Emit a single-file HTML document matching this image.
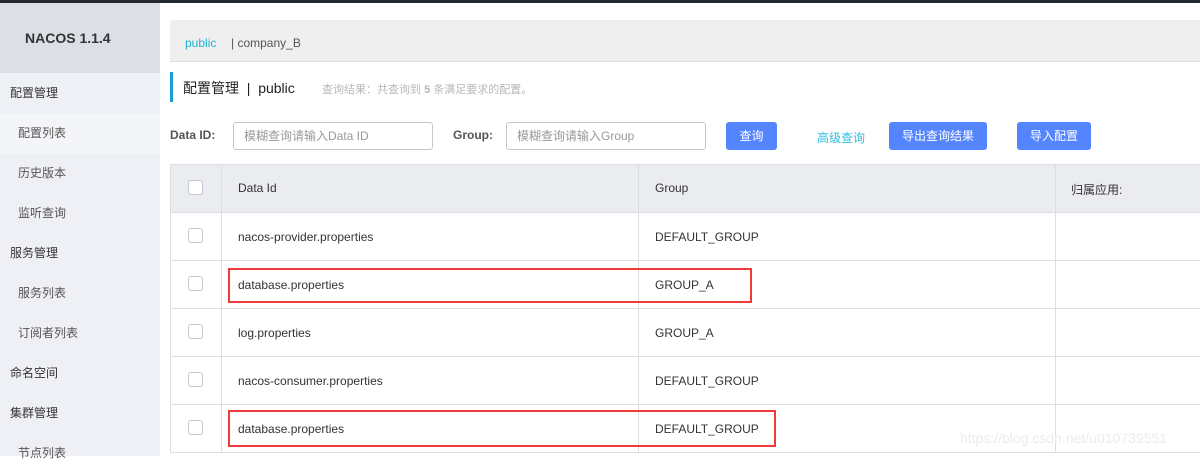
<!DOCTYPE html>
<html><head><meta charset="utf-8"><style>
*{margin:0;padding:0;box-sizing:border-box}
body{width:1200px;height:456px;overflow:hidden;background:#fff;font-family:"Liberation Sans","Noto Sans CJK SC",sans-serif;font-size:12px;color:#333;position:relative}
.a{position:absolute}
.side{left:0;top:0;width:160px;height:456px;background:#eef0f5}
.nav{left:0;width:160px;height:40px;line-height:40px;font-size:12px;color:#333}
.sub{padding-left:18px;color:#555}
.top{padding-left:10px}
.inp{height:28px;border:1px solid #c4c6cf;border-radius:3px;color:#999;padding-left:10px;line-height:26px}
.btn{height:28px;background:#5584ff;color:#fff;border-radius:3px;text-align:center;line-height:28px}
.hl{background:#dcdee3}
.vl{background:#dcdee3;width:1px}
.cb{width:15px;height:15px;border:1px solid #c4c6cf;border-radius:3px;background:#fff}
.t{font-size:12px;color:#333}
.red{border:2px solid #f03a3a}
</style></head><body>
<div class="a side"></div>
<div class="a" style="left:0;top:3px;width:160px;height:70px;background:#dcdfe6"></div>
<div class="a" style="left:0;top:0;width:1200px;height:3px;background:#23272e"></div>
<div class="a" style="left:25px;top:30px;font-weight:bold;font-size:14px;color:#333">NACOS 1.1.4</div>
<div class="a nav top" style="top:73px">配置管理</div>
<div class="a nav sub" style="top:113px;background:#f4f5f8">配置列表</div>
<div class="a nav sub" style="top:153px">历史版本</div>
<div class="a nav sub" style="top:193px">监听查询</div>
<div class="a nav top" style="top:233px">服务管理</div>
<div class="a nav sub" style="top:273px">服务列表</div>
<div class="a nav sub" style="top:313px">订阅者列表</div>
<div class="a nav top" style="top:353px">命名空间</div>
<div class="a nav top" style="top:393px">集群管理</div>
<div class="a nav sub" style="top:433px">节点列表</div>

<div class="a" style="left:170px;top:20px;width:1030px;height:42px;background:#efefef;border-bottom:1px solid #dcdee3"></div>
<div class="a" style="left:185px;top:36px;color:#1fb3d8">public</div>
<div class="a" style="left:231px;top:36px;color:#555">| company_B</div>

<div class="a" style="left:170px;top:72px;width:3px;height:30px;background:#1a9fd6"></div>
<div class="a" style="left:183px;top:78px;font-size:14px;color:#222">配置管理 &nbsp;|&nbsp; public</div>
<div class="a" style="left:322px;top:81px;font-size:11px;color:#b8b8b8">查询结果：共查询到 <b>5</b> 条满足要求的配置。</div>

<div class="a" style="left:170px;top:128px;font-weight:bold;color:#555">Data ID:</div>
<div class="a inp" style="left:233px;top:122px;width:200px">模糊查询请输入Data ID</div>
<div class="a" style="left:453px;top:128px;font-weight:bold;color:#555">Group:</div>
<div class="a inp" style="left:506px;top:122px;width:200px">模糊查询请输入Group</div>
<div class="a btn" style="left:726px;top:122px;width:51px">查询</div>
<div class="a" style="left:817px;top:129px;color:#33bde0">高级查询</div>
<div class="a btn" style="left:889px;top:122px;width:98px">导出查询结果</div>
<div class="a btn" style="left:1017px;top:122px;width:74px">导入配置</div>

<div class="a" style="left:170px;top:164px;width:1030px;height:48px;background:#ebecf0"></div>
<div class="a hl" style="left:170px;top:164px;width:1030px;height:1px"></div>
<div class="a hl" style="left:170px;top:212px;width:1030px;height:1px"></div>
<div class="a hl" style="left:170px;top:260px;width:1030px;height:1px"></div>
<div class="a hl" style="left:170px;top:308px;width:1030px;height:1px"></div>
<div class="a hl" style="left:170px;top:356px;width:1030px;height:1px"></div>
<div class="a hl" style="left:170px;top:404px;width:1030px;height:1px"></div>
<div class="a hl" style="left:170px;top:452px;width:1030px;height:1px"></div>
<div class="a vl" style="left:170px;top:164px;height:289px"></div>
<div class="a vl" style="left:221px;top:164px;height:289px"></div>
<div class="a vl" style="left:638px;top:164px;height:289px"></div>
<div class="a vl" style="left:1055px;top:164px;height:289px"></div>

<div class="a cb" style="left:188px;top:180px"></div>
<div class="a t" style="left:238px;top:181px">Data Id</div>
<div class="a t" style="left:655px;top:181px">Group</div>
<div class="a t" style="left:1071px;top:181px">归属应用:</div>

<div class="a cb" style="left:188px;top:228px"></div>
<div class="a t" style="left:238px;top:230px">nacos-provider.properties</div>
<div class="a t" style="left:655px;top:230px">DEFAULT_GROUP</div>
<div class="a cb" style="left:188px;top:276px"></div>
<div class="a t" style="left:238px;top:278px">database.properties</div>
<div class="a t" style="left:655px;top:278px">GROUP_A</div>
<div class="a cb" style="left:188px;top:324px"></div>
<div class="a t" style="left:238px;top:326px">log.properties</div>
<div class="a t" style="left:655px;top:326px">GROUP_A</div>
<div class="a cb" style="left:188px;top:372px"></div>
<div class="a t" style="left:238px;top:374px">nacos-consumer.properties</div>
<div class="a t" style="left:655px;top:374px">DEFAULT_GROUP</div>
<div class="a cb" style="left:188px;top:420px"></div>
<div class="a t" style="left:238px;top:422px">database.properties</div>
<div class="a t" style="left:655px;top:422px">DEFAULT_GROUP</div>

<div class="a red" style="left:228px;top:268px;width:524px;height:35px"></div>
<div class="a red" style="left:228px;top:410px;width:548px;height:37px"></div>
<div class="a" style="left:960px;top:430px;font-size:14px;color:#ececec">https://blog.csdn.net/u010739551</div>
</body></html>
